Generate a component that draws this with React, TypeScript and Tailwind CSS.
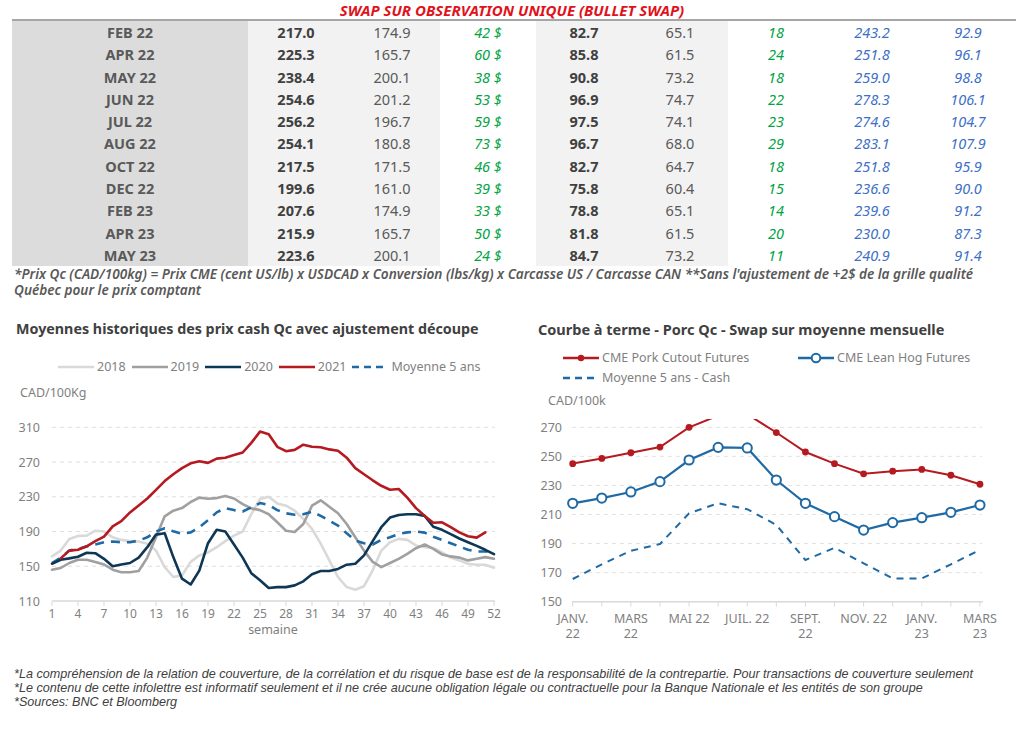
import React from "react"

const FONT = "font-['Noto_Sans',sans-serif]"

const rows = [
  ["FEB 22", "217.0", "174.9", "42 $", "82.7", "65.1", "18", "243.2", "92.9"],
  ["APR 22", "225.3", "165.7", "60 $", "85.8", "61.5", "24", "251.8", "96.1"],
  ["MAY 22", "238.4", "200.1", "38 $", "90.8", "73.2", "18", "259.0", "98.8"],
  ["JUN 22", "254.6", "201.2", "53 $", "96.9", "74.7", "22", "278.3", "106.1"],
  ["JUL 22", "256.2", "196.7", "59 $", "97.5", "74.1", "23", "274.6", "104.7"],
  ["AUG 22", "254.1", "180.8", "73 $", "96.7", "68.0", "29", "283.1", "107.9"],
  ["OCT 22", "217.5", "171.5", "46 $", "82.7", "64.7", "18", "251.8", "95.9"],
  ["DEC 22", "199.6", "161.0", "39 $", "75.8", "60.4", "15", "236.6", "90.0"],
  ["FEB 23", "207.6", "174.9", "33 $", "78.8", "65.1", "14", "239.6", "91.2"],
  ["APR 23", "215.9", "165.7", "50 $", "81.8", "61.5", "20", "230.0", "87.3"],
  ["MAY 23", "223.6", "200.1", "24 $", "84.7", "73.2", "11", "240.9", "91.4"],
]

// weekly cash series (weeks 1..52)
const d2018 = [161.3, 168, 181.5, 185, 185.3, 191, 190, 183.4, 180.4, 179, 178.5, 176, 168, 149, 137.6, 139.5, 155, 162.5, 166, 172, 179, 185.3, 190, 210, 227.3, 230, 222.4, 219.7, 214, 204.4, 193, 176, 156.7, 137.6, 126, 123, 127, 145.3, 168, 177.7, 181.5, 180.4, 174, 172, 171, 166, 160, 156.7, 153, 151.8, 151.8, 148.3]
const d2019 = [146, 148, 153.7, 157.5, 157.5, 155, 152, 146, 143, 143, 144.5, 160, 183.4, 207.5, 214, 217, 224, 229, 227.7, 228.5, 231, 228, 221.6, 216.6, 214.7, 210, 200.6, 191, 189.5, 198.7, 219.7, 226, 218.5, 211, 198.7, 183.4, 168, 155, 149, 153.7, 158.6, 164.4, 170.8, 175, 170, 163.6, 161.3, 160, 156.7, 158.6, 160.5, 158.6]
const d2020 = [153, 157.5, 159, 161, 165.5, 165, 158.6, 150, 152, 153.7, 160, 172, 186.5, 188, 160.5, 135.7, 129, 145, 176.6, 192, 190, 175, 160, 142, 134, 125, 126, 126, 128, 132.7, 140.7, 144.5, 144.5, 147, 151.8, 153, 162.5, 179, 195, 206, 209, 210, 210, 208, 195.6, 192, 187, 182, 177.7, 173.5, 169, 164]
// 2021 starts week 2, ends week 51
const d2021 = [159, 168, 169, 173, 179, 184, 196, 202, 212, 220, 228, 238, 248, 256, 263, 268.5, 271, 269, 274, 275, 278, 281, 292, 305, 302, 287.5, 282.5, 284, 290, 287.5, 287, 284.5, 283, 275, 263, 256, 249, 242.6, 238, 239, 229, 217, 208, 200, 200.6, 195, 189, 184.6, 183, 189]
const avg5 = [153.7, 160, 168, 170, 172.7, 175, 177.7, 178.5, 177.7, 177.7, 179.6, 183.4, 190, 193.7, 190.3, 187.3, 189, 195, 203, 212, 217, 214.7, 213, 217.8, 222.7, 220.5, 214.7, 211, 209.4, 210, 212.8, 208, 202.5, 196.8, 188, 179.6, 176.6, 175, 180.4, 183.4, 187.3, 189, 190, 188.8, 184, 180.4, 176.6, 172.7, 169, 167, 167, 166]

// monthly forward curve, Jan 22 .. Mar 23
const cutout = [245, 248.6, 252.5, 256.4, 270, 278, 279, 266.4, 253, 245, 238, 239.8, 241, 237, 230.8]
const leanHog = [217.7, 221.3, 225.5, 232.6, 247.5, 256.2, 255.8, 233.7, 217.7, 208.5, 199.3, 204.4, 207.8, 211.5, 216.5]
const cash5 = [165.6, 175.7, 185, 189.7, 210.8, 217.7, 213.6, 202.8, 178.7, 187.1, 176.4, 166, 166, 175.7, 185.6]

const LX = (w: number) => 52 + (w - 1) * 8.667
const LY = (v: number) => 42.3 + (310 - v) * 0.8685
const RX = (i: number) => 60.7 + i * 29.09
const RY = (v: number) => 37.3 + (270 - v) * 1.453

const path = (pts: [number, number][]) =>
  pts.map((p, i) => `${i ? "L" : "M"}${p[0].toFixed(1)} ${p[1].toFixed(1)}`).join(" ")

const weekPath = (data: number[], start = 1) => path(data.map((v, i) => [LX(i + start), LY(v)]))
const monthPath = (data: number[]) => path(data.map((v, i) => [RX(i), RY(v)]))

function Swatch({ color, dashed, marker }: { color: string; dashed?: boolean; marker?: "dot" | "ring" }) {
  return (
    <svg width="36" height="12" className="shrink-0">
      <line x1="0" y1="6" x2="36" y2="6" stroke={color} strokeWidth={2.5} strokeDasharray={dashed ? "7 5" : undefined} />
      {marker === "dot" && <circle cx="18" cy="6" r="3.2" fill={color} />}
      {marker === "ring" && <circle cx="18" cy="6" r="4.3" fill="white" stroke={color} strokeWidth={2} />}
    </svg>
  )
}

function CashChart() {
  const weeks = Array.from({ length: 18 }, (_, i) => 1 + i * 3)
  return (
    <svg width="512" height="255" className="block">
      <text x="20" y="12" fontSize="12.5" fill="#7f7f7f">CAD/100Kg</text>
      {[310, 270, 230, 190, 150].map((v) => (
        <line key={v} x1="52" x2="495" y1={LY(v)} y2={LY(v)} stroke="#dedede" strokeDasharray="4 4" />
      ))}
      <line x1="52" x2="495" y1={LY(110)} y2={LY(110)} stroke="#d9d9d9" strokeWidth={1.5} />
      {[310, 270, 230, 190, 150, 110].map((v) => (
        <text key={v} x="40" y={LY(v) + 4.5} fontSize="12.5" fill="#7f7f7f" textAnchor="end">{v}</text>
      ))}
      {weeks.map((w) => (
        <g key={w}>
          <line x1={LX(w)} x2={LX(w)} y1={LY(110)} y2={LY(110) + 5} stroke="#d9d9d9" />
          <text x={LX(w)} y="233" fontSize="12" fill="#7f7f7f" textAnchor="middle">{w}</text>
        </g>
      ))}
      <text x="273" y="249" fontSize="12.5" fill="#7f7f7f" textAnchor="middle">semaine</text>
      <g fill="none" strokeLinejoin="round" strokeLinecap="round" strokeWidth={2.6}>
        <path d={weekPath(d2018)} stroke="#d9d9d9" />
        <path d={weekPath(d2019)} stroke="#a0a0a0" />
        <path d={weekPath(avg5)} stroke="#1f6aa5" strokeDasharray="9 7" strokeLinecap="butt" />
        <path d={weekPath(d2020)} stroke="#0e3756" />
        <path d={weekPath(d2021, 2)} stroke="#b41a1f" />
      </g>
    </svg>
  )
}

function ForwardChart() {
  const labels: Record<number, string[]> = {
    0: ["JANV.", "22"],
    2: ["MARS", "22"],
    4: ["MAI 22"],
    6: ["JUIL. 22"],
    8: ["SEPT.", "22"],
    10: ["NOV. 22"],
    12: ["JANV.", "23"],
    14: ["MARS", "23"],
  }
  return (
    <svg width="512" height="256" className="block">
      <defs>
        <clipPath id="plot">
          <rect x="0" y="29" width="512" height="200" />
        </clipPath>
      </defs>
      <text x="36" y="15" fontSize="12.5" fill="#7f7f7f">CAD/100k</text>
      {[270, 250, 230, 210, 190, 170].map((v) => (
        <line key={v} x1="60" x2="470" y1={RY(v)} y2={RY(v)} stroke="#e2e2e2" strokeDasharray="4 4" />
      ))}
      <line x1="60" x2="471" y1={RY(150)} y2={RY(150)} stroke="#d9d9d9" strokeWidth={1.5} />
      {[270, 250, 230, 210, 190, 170, 150].map((v) => (
        <text key={v} x="50" y={RY(v) + 4.5} fontSize="12.5" fill="#7f7f7f" textAnchor="end">{v}</text>
      ))}
      {cutout.map((_, i) => (
        <line key={i} x1={RX(i)} x2={RX(i)} y1={RY(150)} y2={RY(150) + 5} stroke="#d9d9d9" />
      ))}
      {Object.entries(labels).map(([k, l]) => (
        <text key={k} x={RX(Number(k))} y="233" fontSize="12.5" fill="#7f7f7f" textAnchor="middle">
          <tspan x={RX(Number(k))}>{l[0]}</tspan>
          {l[1] && <tspan x={RX(Number(k))} dy="15">{l[1]}</tspan>}
        </text>
      ))}
      <g clipPath="url(#plot)">
        <path d={monthPath(cash5)} fill="none" stroke="#1f6aa5" strokeWidth={2} strokeDasharray="7 6" />
        <path d={monthPath(cutout)} fill="none" stroke="#b41a1f" strokeWidth={2} />
        {cutout.map((v, i) => (
          <circle key={i} cx={RX(i)} cy={RY(v)} r="3.4" fill="#b41a1f" />
        ))}
        <path d={monthPath(leanHog)} fill="none" stroke="#1f6aa5" strokeWidth={2.2} />
        {leanHog.map((v, i) => (
          <circle key={i} cx={RX(i)} cy={RY(v)} r="4.6" fill="white" stroke="#1f6aa5" strokeWidth={2} />
        ))}
      </g>
    </svg>
  )
}

export default function App() {
  return (
    <div className={`w-[1024px] h-[730px] bg-white overflow-hidden ${FONT}`}>
      {/* Bullet swap table */}
      <div className="h-[19px] text-center text-[15px] leading-[20px] font-bold italic text-[#e0121b]">
        SWAP SUR OBSERVATION UNIQUE (BULLET SWAP)
      </div>
      <div className="ml-[12px] w-[1004px] border-t-2 border-[#a6a6a6]">
        {rows.map((r) => (
          <div key={r[0]} className="flex h-[22.3px] items-center text-[14.5px] leading-[22px]">
            <div className="w-[236px] h-full bg-[#dcdcdc] text-center font-bold text-[#595959]">{r[0]}</div>
            <div className="w-[96px] h-full bg-[#f2f2f2] text-center font-bold text-[#404040]">{r[1]}</div>
            <div className="w-[96px] h-full bg-[#f2f2f2] text-center text-[#595959]">{r[2]}</div>
            <div className="w-[96px] h-full text-center italic text-[#00a443]">{r[3]}</div>
            <div className="w-[96px] h-full bg-[#f2f2f2] text-center font-bold text-[#404040]">{r[4]}</div>
            <div className="w-[96px] h-full bg-[#f2f2f2] text-center text-[#595959]">{r[5]}</div>
            <div className="w-[96px] h-full text-center italic text-[#00a443]">{r[6]}</div>
            <div className="w-[96px] h-full text-center italic text-[#3c6fc6]">{r[7]}</div>
            <div className="w-[96px] h-full text-center italic text-[#3c6fc6]">{r[8]}</div>
          </div>
        ))}
      </div>
      <div className="pl-[14px] text-[13.6px] leading-[16px] italic font-semibold text-[#595959] whitespace-nowrap">
        *Prix Qc (CAD/100kg) = Prix CME (cent US/lb) x USDCAD x Conversion (lbs/kg) x Carcasse US / Carcasse CAN **Sans l'ajustement de +2$ de la grille qualité
        <br />
        Québec pour le prix comptant
      </div>

      {/* Charts */}
      <div className="flex mt-[22px]">
        <div className="w-[512px]">
          <div className="pl-[16px] h-[18px] text-[14.3px] leading-[18px] font-bold text-[#404040]">
            Moyennes historiques des prix cash Qc avec ajustement découpe
          </div>
          <div className="mt-[21px] h-[16px] pl-[58px] flex items-center text-[12.5px] text-[#7f7f7f]">
            <Swatch color="#d9d9d9" />
            <span className="ml-[3px] mr-[6px]">2018</span>
            <Swatch color="#a0a0a0" />
            <span className="ml-[3px] mr-[6px]">2019</span>
            <Swatch color="#0e3756" />
            <span className="ml-[3px] mr-[6px]">2020</span>
            <Swatch color="#b41a1f" />
            <span className="ml-[3px] mr-[6px]">2021</span>
            <Swatch color="#1f6aa5" dashed />
            <span className="ml-[3px]">Moyenne 5 ans</span>
          </div>
          <div className="mt-[10px]">
            <CashChart />
          </div>
        </div>
        <div className="w-[512px]">
          <div className="pl-[26px] h-[18px] text-[14.5px] leading-[18px] font-bold text-[#404040]">
            Courbe à terme - Porc Qc - Swap sur moyenne mensuelle
          </div>
          <div className="mt-[12px] h-[16px] pl-[51px] flex items-center text-[12.5px] text-[#7f7f7f]">
            <Swatch color="#b41a1f" marker="dot" />
            <span className="ml-[3px] w-[196px]">CME Pork Cutout Futures</span>
            <Swatch color="#1f6aa5" marker="ring" />
            <span className="ml-[3px]">CME Lean Hog Futures</span>
          </div>
          <div className="mt-[4px] h-[16px] pl-[51px] flex items-center text-[12.5px] text-[#7f7f7f]">
            <Swatch color="#1f6aa5" dashed />
            <span className="ml-[3px]">Moyenne 5 ans - Cash</span>
          </div>
          <div className="mt-[4px]">
            <ForwardChart />
          </div>
        </div>
      </div>

      {/* Footer */}
      <div className="mt-[21px] pl-[14px] text-[12.6px] leading-[14px] italic text-[#404040] font-['Liberation_Sans',sans-serif] whitespace-nowrap">
        <div>*La compréhension de la relation de couverture, de la corrélation et du risque de base est de la responsabilité de la contrepartie. Pour transactions de couverture seulement</div>
        <div>*Le contenu de cette infolettre est informatif seulement et il ne crée aucune obligation légale ou contractuelle pour la Banque Nationale et les entités de son groupe</div>
        <div>*Sources: BNC et Bloomberg</div>
      </div>
    </div>
  )
}
